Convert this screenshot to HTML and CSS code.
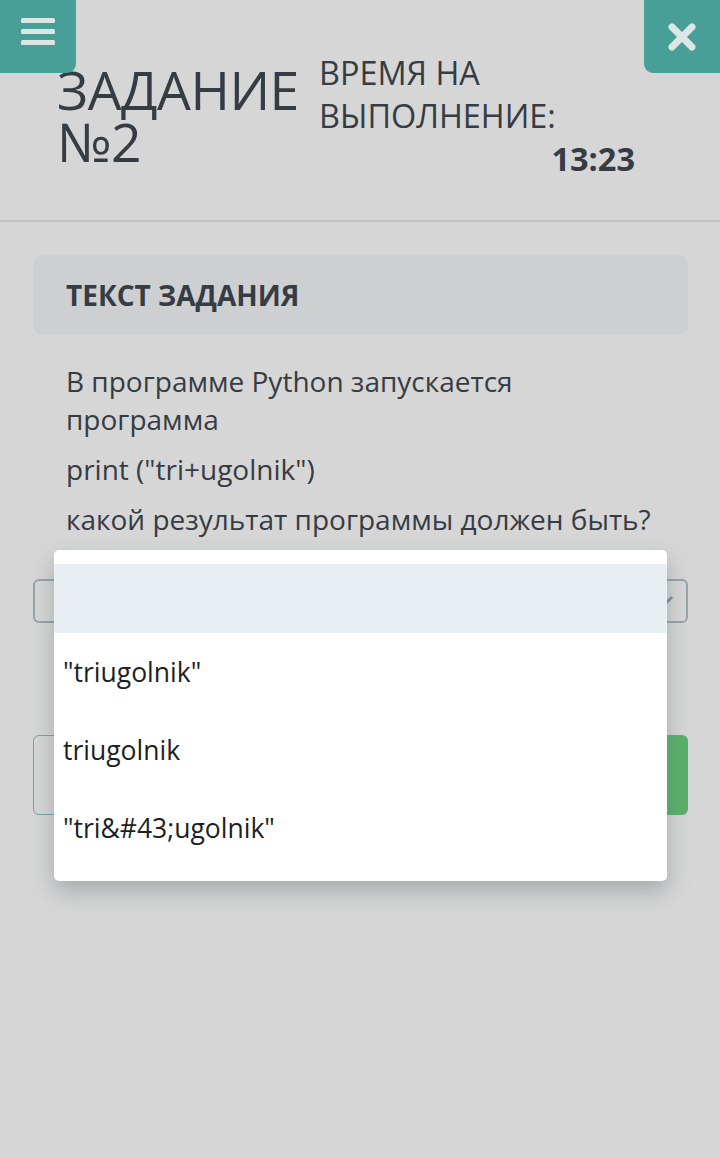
FILE: index.html
```html
<!DOCTYPE html>
<html>
<head>
    <title>Задание №2</title>
    <link rel="stylesheet" href="styles.css">
</head>
<body>
    <button class="corner-btn menu-btn" aria-label="Меню">
        <svg width="34" height="28" viewBox="0 0 34 28">
            <rect x="0" y="0" width="34" height="5" rx="1.5"/>
            <rect x="0" y="11" width="34" height="5" rx="1.5"/>
            <rect x="0" y="22" width="34" height="5" rx="1.5"/>
        </svg>
    </button>
    <button class="corner-btn close-btn" aria-label="Закрыть">
        <svg width="30" height="28" viewBox="0 0 30 28">
            <path d="M5 4 L25 24 M25 4 L5 24" stroke-width="7" stroke-linecap="round"/>
        </svg>
    </button>

    <header class="task-header">
        <h1 class="task-title">ЗАДАНИЕ №2</h1>
        <div class="timer">
            <div class="timer-label">ВРЕМЯ НА ВЫПОЛНЕНИЕ:</div>
            <div class="timer-value">13:23</div>
        </div>
    </header>

    <main class="content">
        <div class="section-head">ТЕКСТ ЗАДАНИЯ</div>

        <div class="question">
            <p>В программе Python запускается программа</p>
            <p>print ("tri+ugolnik")</p>
            <p>какой результат программы должен быть?</p>
        </div>

        <div class="answer-select">
            <svg class="chevron" width="20" height="12" viewBox="0 0 20 12">
                <path d="M2 2 L10 10 L18 2" fill="none" stroke-width="3"/>
            </svg>
        </div>

        <!-- labels are covered by the open dropdown -->
        <div class="actions">
            <button class="btn btn-outline" aria-label="Назад"></button>
            <button class="btn btn-green" aria-label="Ответить"></button>
        </div>

        <ul class="dropdown">
            <li class="option active"></li>
            <li class="option">"triugolnik"</li>
            <li class="option">triugolnik</li>
            <li class="option">"tri&amp;#43;ugolnik"</li>
        </ul>
    </main>
</body>
</html>
```

FILE: styles.css
```css
body { margin: 0; background: #d6d6d6; font-family: "Open Sans", "Noto Sans", sans-serif; color: #363c43; position: relative; min-height: 1158px; }

.corner-btn { position: absolute; top: 0; width: 76px; height: 73px; border: none; background: #479f98; display: flex; align-items: center; justify-content: center; padding: 0; z-index: 2; }
.menu-btn { left: 0; border-radius: 0 0 9px 0; }
.menu-btn svg { fill: #dde6e5; margin-top: -9px; }
.close-btn { right: 0; border-radius: 0 0 0 9px; }
.close-btn svg { stroke: #dde6e5; }

.task-header { display: flex; align-items: flex-start; gap: 20px; padding: 64px 0 0 57px; height: 156px; border-bottom: 2px solid #c2c2c2; }
.task-title { margin: 0; width: 242px; font-size: 53.5px; line-height: 52px; font-weight: 400; letter-spacing: -0.5px; }
.timer { width: 316px; margin-top: -13px; }
.timer-label { font-size: 32.4px; line-height: 43px; }
.timer-value { font-size: 32.5px; line-height: 43px; font-weight: 700; text-align: right; }

.content { position: relative; padding: 33px 32px 0 33px; }

.section-head { background: #cdcfd1; border-radius: 10px; height: 80px; display: flex; align-items: center; padding: 0 33px; font-size: 28px; font-weight: 700; }

.question { padding: 27px 0 0 33px; font-size: 28px; line-height: 38px; }
.question p { margin: 0 0 12px; max-width: 595px; }

.answer-select { height: 40px; margin-top: 41px; border: 2px solid #93a5a9; border-radius: 6px; display: flex; align-items: center; justify-content: flex-end; padding-right: 12px; }
.chevron { stroke: #7f9296; }

.actions { display: flex; gap: 20px; margin-top: 112px; }
.btn { flex: 1; height: 80px; border-radius: 6px; }
.btn-outline { background: transparent; border: 1.5px solid #6ea7a2; }
.btn-green { background: #5bb06a; border: none; }

.dropdown { position: absolute; top: 328px; left: 54px; width: 613px; margin: 0; padding: 14px 0; list-style: none; background: #fff; border-radius: 5px; box-shadow: 0 10px 22px rgba(90, 110, 110, 0.4); }
.option { height: 78px; display: flex; align-items: center; padding-left: 9px; font-size: 26.5px; color: #1f1f1f; }
.option.active { height: 69px; background: #e8eef2; }
```
